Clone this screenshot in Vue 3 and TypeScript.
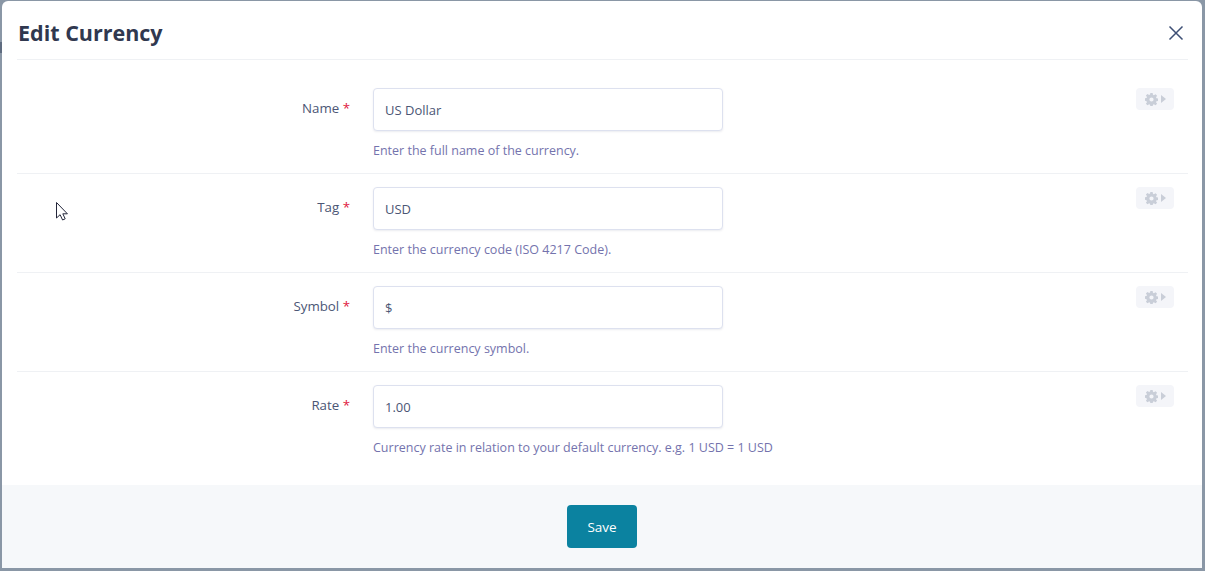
<script setup lang="ts">
type Field = {
  label: string;
  value: string;
  help: string;
};

const fields: Field[] = [
  { label: "Name", value: "US Dollar", help: "Enter the full name of the currency." },
  { label: "Tag", value: "USD", help: "Enter the currency code (ISO 4217 Code)." },
  { label: "Symbol", value: "$", help: "Enter the currency symbol." },
  { label: "Rate", value: "1.00", help: "Currency rate in relation to your default currency. e.g. 1 USD = 1 USD" },
];
</script>

<template>
  <div class="backdrop">
    <i class="behind"></i>
    <section class="modal">
      <header class="modal-header">
        <h2>Edit Currency</h2>
        <button type="button" class="close" aria-label="Close">
          <svg width="16" height="16" viewBox="0 0 16 16">
            <path d="M1.5 1.5 14.5 14.5M14.5 1.5 1.5 14.5" stroke="#3d4f75" stroke-width="1.5" fill="none" />
          </svg>
        </button>
      </header>

      <div class="modal-body">
        <div v-for="field in fields" :key="field.label" class="row">
          <label class="label">{{ field.label }} <span class="req">*</span></label>
          <div class="control">
            <input class="input" type="text" :value="field.value" />
            <p class="help">{{ field.help }}</p>
          </div>
          <button type="button" class="settings" aria-label="Settings">
            <svg width="13" height="13" viewBox="0 0 16 16">
              <path
                fill="#c9ced8"
                fill-rule="evenodd"
                d="M6.6 0h2.8l.4 2.2 1.2.5 1.9-1.3 2 2-1.3 1.9.5 1.2 2.2.4v2.8l-2.2.4-.5 1.2 1.3 1.9-2 2-1.9-1.3-1.2.5-.4 2.2H6.6l-.4-2.2-1.2-.5-1.9 1.3-2-2 1.3-1.9-.5-1.2L-.3 9.4V6.6l2.2-.4.5-1.2L1.1 3.1l2-2L5 2.4l1.2-.5L6.6 0ZM8 5.4a2.6 2.6 0 1 0 0 5.2 2.6 2.6 0 0 0 0-5.2Z"
              />
            </svg>
            <svg width="5" height="8" viewBox="0 0 5 8">
              <path fill="#c9ced8" d="M0 0l5 4-5 4Z" />
            </svg>
          </button>
        </div>
      </div>

      <footer class="modal-footer">
        <button type="button" class="save">Save</button>
      </footer>
    </section>

    <svg class="cursor" width="15" height="21" viewBox="0 0 15 21">
      <path d="M1.5 1.5v15.5l3.6-3.3 2.5 5.3 2.6-1.2-2.4-5h4.6Z" fill="#fff" stroke="#23263a" stroke-width="1" />
    </svg>
  </div>
</template>

<style scoped>
.backdrop {
  position: relative;
  width: 1205px;
  height: 571px;
  box-sizing: border-box;
  padding: 1px 3px 3px 2px;
  background: #8a97a6;
  overflow: hidden;
  font-family: "Open Sans", "Noto Sans", sans-serif;
}

.behind {
  position: absolute;
  left: 0;
  top: 42px;
  width: 2px;
  height: 11px;
  background: #5f6c80;
}

.modal {
  height: 567px;
  display: flex;
  flex-direction: column;
  background: #ffffff;
  border-radius: 6px 6px 0 0;
  overflow: hidden;
}

.modal-header {
  height: 58px;
  margin: 0 14px 0 15px;
  padding: 0 1px;
  display: flex;
  align-items: center;
  justify-content: space-between;
  border-bottom: 1px solid #eff1f4;
}

.modal-header h2 {
  margin: 0;
  font-size: 21.5px;
  line-height: 30px;
  font-weight: 700;
  color: #30384f;
  position: relative;
  top: 3px;
}

.close {
  width: 16px;
  height: 16px;
  padding: 0;
  margin-right: 3px;
  border: 0;
  background: none;
  display: flex;
  position: relative;
  top: 3px;
}

.modal-body {
  flex: 1;
  margin: 0 14px 0 15px;
}

.row {
  display: grid;
  grid-template-columns: 333px 350px 1fr;
  column-gap: 23px;
  height: 99px;
  padding-top: 13px;
  box-sizing: border-box;
  border-bottom: 1px solid #eff1f4;
}

.row:first-child {
  height: 114px;
  padding-top: 28px;
}

.row:last-child {
  border-bottom: 0;
}

.label {
  text-align: right;
  font-size: 13.3px;
  line-height: 18px;
  color: #4b5675;
  padding-top: 11px;
}

.req {
  color: #e0183d;
}

.control {
  min-width: 0;
}

.input {
  display: block;
  width: 100%;
  height: 43px;
  box-sizing: border-box;
  padding: 0 11px;
  border: 1px solid #dde1ef;
  border-radius: 4px;
  box-shadow: 0 1px 2px rgba(60, 70, 110, 0.1);
  font: inherit;
  font-size: 13px;
  color: #4b5675;
  outline: none;
}

.help {
  margin: 11px 0 0;
  font-size: 12.5px;
  line-height: 17px;
  color: #7473ad;
  white-space: nowrap;
}

.settings {
  justify-self: end;
  width: 38px;
  height: 22px;
  margin: 0 14px 0 0;
  padding: 0;
  border: 0;
  border-radius: 4px;
  background: #f4f5f9;
  display: flex;
  align-items: center;
  justify-content: center;
  gap: 3px;
}

.modal-footer {
  height: 83px;
  flex: none;
  background: #f6f8fa;
  display: flex;
  align-items: center;
  justify-content: center;
}

.save {
  width: 70px;
  height: 43px;
  border: 0;
  border-radius: 4px;
  background: #0b82a0;
  color: #ffffff;
  font: inherit;
  font-size: 13.5px;
}

.cursor {
  position: absolute;
  left: 55px;
  top: 201px;
}
</style>

<style>
html,
body {
  margin: 0;
  overflow: hidden;
}
</style>
